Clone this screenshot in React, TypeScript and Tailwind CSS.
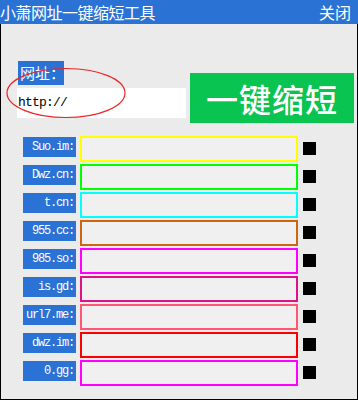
const services = [
  { name: "Suo.im:", color: "border-[#ffff00]" },
  { name: "Dwz.cn:", color: "border-[#00ff00]" },
  { name: "t.cn:", color: "border-[#00ffff]" },
  { name: "955.cc:", color: "border-[#cc6611]" },
  { name: "985.so:", color: "border-[#ff00ff]" },
  { name: "is.gd:", color: "border-[#dd1188]" },
  { name: "url7.me:", color: "border-[#ff5577]" },
  { name: "dwz.im:", color: "border-[#ff0000]" },
  { name: "0.gg:", color: "border-[#ff00ff]" },
];

const App = () => {
  return (
    <div className="w-[358px] h-[400px] flex flex-col bg-white font-['Noto_Sans_CJK_SC',sans-serif]">
      {/* Title bar */}
      <div className="h-[24px] bg-[#2a73d5] flex items-center justify-between text-white text-[16px] leading-none">
        <span className="tracking-[-0.5px]">小萧网址一键缩短工具</span>
        <span className="pr-[7px]">关闭</span>
      </div>

      <div className="relative flex-1 bg-[#ebebeb] border border-t-0 border-black">
        {/* URL input area */}
        <div className="flex items-start pl-[16px]">
          <div className="w-[169px] mt-[37px]">
            <div className="w-[46px] h-[24px] ml-[1px] bg-[#2a73d5] text-white text-[15px] leading-[24px] pl-[2px] overflow-hidden whitespace-nowrap">
              网址：
            </div>
            <div className="mt-[3px] h-[30px] bg-white flex items-center pl-[1px] font-['Liberation_Mono',monospace] text-[13px] text-black tracking-[-0.8px]">
              http://
            </div>
          </div>
          <button className="ml-[4px] mt-[49px] w-[164px] h-[50px] bg-[#0ac451] text-white text-[32px] font-medium leading-none tracking-[1px]">
            一键缩短
          </button>
        </div>

        {/* red ellipse annotation */}
        <svg className="absolute left-0 top-[40px] pointer-events-none" width="130" height="60" viewBox="0 0 130 60">
          <ellipse cx="65" cy="29" rx="59" ry="24.5" fill="none" stroke="#ee2222" strokeWidth="1.2" />
        </svg>

        {/* Service rows */}
        <div className="mt-[13px] flex flex-col gap-[2px]">
          {services.map((s) => (
            <div key={s.name} className="h-[26px] flex items-start pl-[22px]">
              <div className="mt-[1px] w-[53px] h-[20px] bg-[#2a73d5] text-white text-right pr-[2px] font-['Liberation_Mono',monospace] text-[12px] leading-[20px] tracking-[-1.2px]">
                {s.name}
              </div>
              <div className={`ml-[4px] w-[218px] h-[26px] bg-[#f0f0f0] border-2 ${s.color}`}></div>
              <div className="ml-[5px] mt-[6px] w-[13px] h-[13px] bg-black"></div>
            </div>
          ))}
        </div>
      </div>
    </div>
  );
};

export default App;
